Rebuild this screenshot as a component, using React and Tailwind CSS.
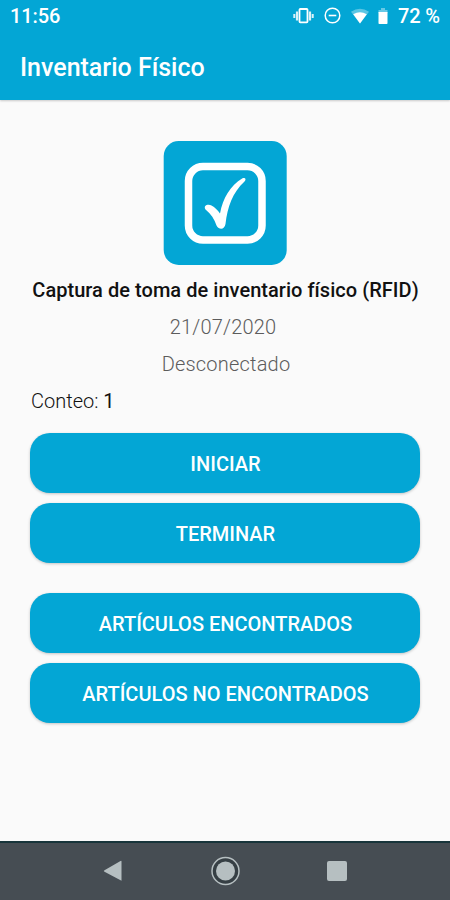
function StatusBar() {
  return (
    <div className="flex h-[32px] items-center justify-between pl-[10px] pr-[10px] text-[20px] font-medium">
      <span className="tracking-[-0.1px]">11:56</span>
      <div className="flex items-center">
        <svg className="h-[18px] w-[22px]" viewBox="0 0 22 18" fill="none" stroke="currentColor">
          <rect x="6.500" y="2" width="8" height="13.4" rx="0.8" strokeWidth="1.8" />
          <path d="M4 4.500v9M17 4.500v9" strokeWidth="2.200" opacity="0.85" />
          <path d="M1.300 7v4M19.700 7v4" strokeWidth="2" opacity="0.85" />
        </svg>
        <svg className="ml-[9px] h-[18px] w-[18px]" viewBox="0 0 18 18" fill="none" stroke="currentColor">
          <circle cx="8.500" cy="8.500" r="7.300" strokeWidth="1.500" />
          <path d="M4.700 8.500h7.600" strokeWidth="1.600" />
        </svg>
        <svg className="ml-[8px] h-[18px] w-[20px]" viewBox="0 0 20 18" fill="currentColor">
          <path d="M10 16.500L1 4.800Q10 -1.200 19 4.800Z" opacity="0.35" />
          <path d="M10 16.500L3.200 7.300Q10 3 16.800 7.300Z" />
        </svg>
        <svg className="ml-[7px] h-[18px] w-[12px]" viewBox="0 0 12 18" fill="currentColor">
          <path d="M4 1h4v2H10.500v3H1.500V3h2.500Z" opacity="0.4" />
          <path d="M1.500 5h9v11.200a.8.8 0 0 1-.8.8H2.300a.8.8 0 0 1-.8-.8Z" />
        </svg>
        <span className="ml-[9px] tracking-[-0.1px]">72 %</span>
      </div>
    </div>
  );
}

function ActionButton({ children }) {
  return (
    <button className="flex h-[60px] w-full items-center justify-center rounded-[20px] bg-[#03a6d5] pt-[2px] pl-px text-[20px] font-medium text-white shadow-[0_1px_3px_rgba(0,0,0,0.22)]">
      {children}
    </button>
  );
}

function CheckTile() {
  return (
    <svg className="h-[124px] w-[124px]" viewBox="0 0 124 124">
      <rect x="0.700" width="123" height="124" rx="15" fill="#03a6d5" />
      <rect x="25.500" y="25.500" width="73.500" height="73.500" rx="14.500" fill="none" stroke="#fff" strokeWidth="7.500" />
      <path
        d="M42.500 68.500C40 65 44.500 62.500 48.500 64.500C52 66.500 54.500 69 57 72.500C60 57 67 45 79.500 37.300C82.500 36 83.500 38.500 81.500 40.500C69.500 51.500 64.500 66 62.500 83C61.500 89 56 89 53.500 84.500C51.500 78 48 73 42.500 68.500Z"
        fill="#fff"
      />
    </svg>
  );
}

function NavBar() {
  return (
    <nav className="flex h-[59px] items-center border-t-2 border-[#18353b] bg-[#464d53] pb-[2px] pl-[103px] text-[#b6bfc1]">
      <svg className="h-[22px] w-[20px]" viewBox="0 0 20 22" fill="currentColor">
        <path d="M18.500 1.200v19.600L1.500 11.800Q0 11 1.500 10.200L17.500 1Q18.500.5 18.500 1.200Z" />
      </svg>
      <svg className="ml-[87px] h-[30px] w-[30px]" viewBox="0 0 30 30">
        <circle cx="15.500" cy="15" r="13.500" fill="#363f44" stroke="currentColor" strokeWidth="1.500" />
        <circle cx="15.500" cy="15" r="9.500" fill="currentColor" />
      </svg>
      <div className="ml-[87px] h-5 w-5 rounded-[2px] bg-[#b6bfc1]" />
    </nav>
  );
}

export default function App() {
  return (
    <div className="flex h-[900px] w-[450px] flex-col overflow-hidden bg-[#fafafa] font-['Roboto',sans-serif]">
      <header className="h-[100px] shrink-0 bg-[#03a6d5] text-white shadow-[0_1px_2px_rgba(0,0,0,0.2)]">
        <StatusBar />
        <h1 className="flex h-[68px] items-center pt-[3px] pl-5 text-[25px] font-medium">Inventario Físico</h1>
      </header>

      <main className="flex flex-1 flex-col items-center px-[30px] pt-[41px]">
        <CheckTile />
        <h2 className="mt-[7px] h-[37px] pl-px whitespace-nowrap text-[20px] leading-[37px] font-medium tracking-[0.04px] text-[#111]">
          Captura de toma de inventario físico (RFID)
        </h2>
        <p className="pr-[4px] text-[20px] leading-[37px] font-light tracking-[0.2px] text-[#5c5c5c]">21/07/2020</p>
        <p className="pl-[2px] text-[20px] leading-[37px] font-light tracking-[0.2px] text-[#5c5c5c]">Desconectado</p>
        <p className="w-full pl-px text-[20px] leading-[37px] font-light text-[#111]">
          Conteo: <span className="font-normal">1</span>
        </p>
        <div className="mt-[13px] flex w-full flex-col gap-[10px]">
          <ActionButton>INICIAR</ActionButton>
          <ActionButton>TERMINAR</ActionButton>
        </div>
        <div className="mt-[30px] flex w-full flex-col gap-[10px]">
          <ActionButton>ARTÍCULOS ENCONTRADOS</ActionButton>
          <ActionButton>ARTÍCULOS NO ENCONTRADOS</ActionButton>
        </div>
      </main>

      <NavBar />
    </div>
  );
}
